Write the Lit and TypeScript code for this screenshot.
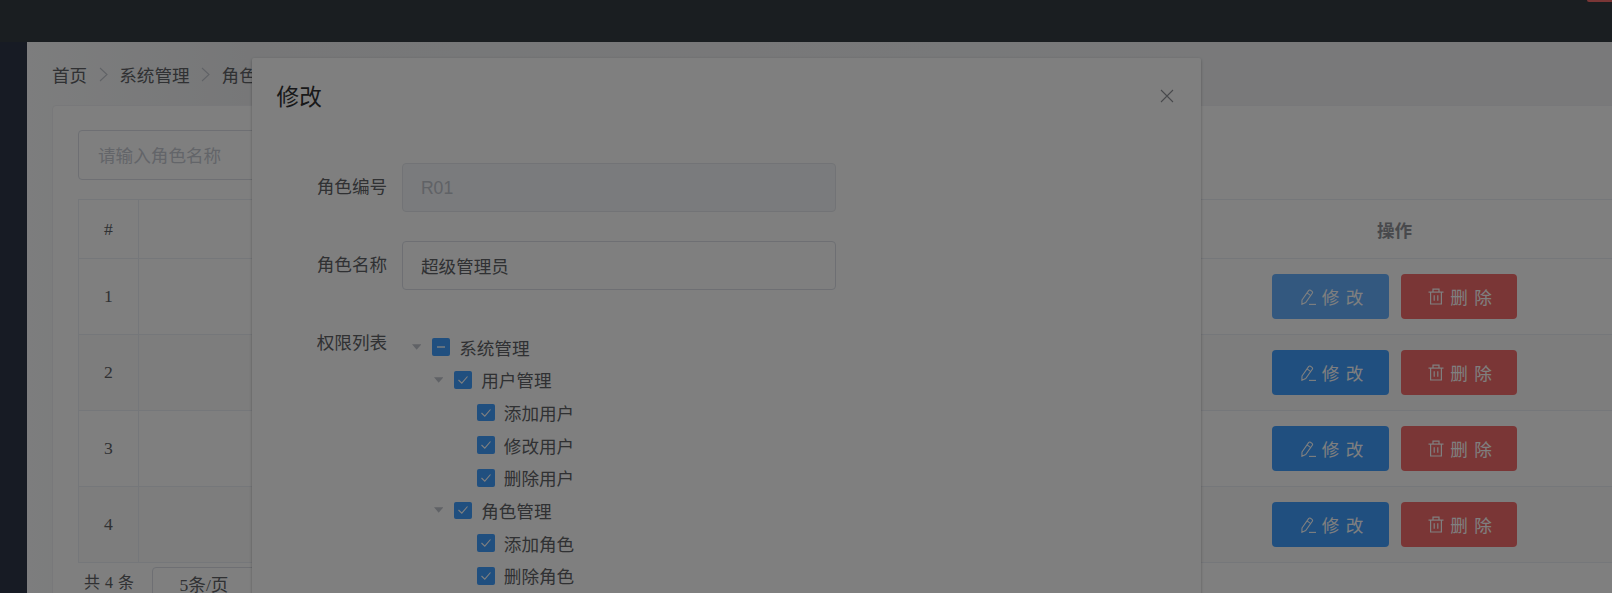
import { LitElement, html, css } from "lit";
import { customElement } from "lit/decorators.js";

const pencil = html`<svg class="ico" width="15" height="16" viewBox="0 0 15 16" fill="none" stroke="currentColor" stroke-width="1.1"><path d="M1 11 L7.6 1.6 Q8.4 .6 9.5 1.3 L11 2.4 Q12 3.2 11.3 4.2 L4.7 13.6 L.9 15.3 Z"/><path d="M6 3.9 L9.8 6.6"/><path d="M8 15.4 H15"/></svg>`;
const trash = html`<svg class="ico" width="16" height="17" viewBox="0 0 16 17" fill="none" stroke="currentColor" stroke-width="1.2"><path d="M.5 4.1 H15.5"/><path d="M5 4 V1.2 H11 V4"/><path d="M2.6 4.1 V16 H13.4 V4.1"/><path d="M6.2 7.2 V12.8 M9.8 7.2 V12.8"/></svg>`;

type Node = { label: string; depth: number; arrow?: boolean; state: "checked" | "partial" };
const tree: Node[] = [
  { label: "系统管理", depth: 0, arrow: true, state: "partial" },
  { label: "用户管理", depth: 1, arrow: true, state: "checked" },
  { label: "添加用户", depth: 2, state: "checked" },
  { label: "修改用户", depth: 2, state: "checked" },
  { label: "删除用户", depth: 2, state: "checked" },
  { label: "角色管理", depth: 1, arrow: true, state: "checked" },
  { label: "添加角色", depth: 2, state: "checked" },
  { label: "删除角色", depth: 2, state: "checked" },
];

@customElement("app-root")
export class AppRoot extends LitElement {
  static styles = css`
    :host { display: block; width: 1612px; height: 593px; position: relative; overflow: hidden;
      font-family: "Liberation Sans", "Noto Sans CJK SC", sans-serif; font-size: 17.6px; color: #606266; }
    * { box-sizing: border-box; }
    .header { height: 42px; background: #353d43; display: flex; justify-content: flex-end; align-items: flex-start; }
    .redtab { width: 25px; height: 2px; background: #f56c6c; border-bottom-left-radius: 3px; }
    .below { display: flex; height: 551px; }
    .side { width: 27px; flex: none; background: #2e3648; }
    .main { flex: 1; min-width: 0; overflow: hidden; padding: 21px 0 0 25px;
      background: linear-gradient(90deg, #fafbfc 0, #eeeff1 220px, #f2f3f5 1174px); }
    .crumb { display: flex; align-items: center; height: 22px; margin-bottom: 20px; }
    .sep { width: 32px; display: flex; justify-content: center; color: #c0c4cc; }
    .card { width: 1600px; background: #fff; border: 1px solid #f0f1f4; border-radius: 4px; padding: 23.5px 25px; }
    .search { width: 400px; height: 50px; border: 1px solid #dcdfe6; border-radius: 4px; padding: 0 19px;
      display: flex; align-items: center; color: #c6cad2; margin-bottom: 19.5px; }
    .table { display: grid; grid-template-columns: 60px 1fr 462px; grid-template-rows: 59px repeat(4, 76px); border-left: 1px solid #ebeef5; border-top: 1px solid #ebeef5;
      font-family: "Liberation Serif", "Noto Sans CJK SC", serif; }
    .table > div { border-right: 1px solid #ebeef5; border-bottom: 1px solid #ebeef5; display: flex; align-items: center; justify-content: center; }
    .table .opsh { font-family: "Liberation Sans", "Noto Sans CJK SC", sans-serif; font-weight: 700; color: #909399; }
    .table .alt { background: #fafafa; }
    .table .ops { gap: 12px; font-family: "Liberation Sans", "Noto Sans CJK SC", sans-serif; }
    .btn { height: 45px; border-radius: 4px; color: #fff; display: flex; align-items: center; justify-content: center; gap: 6px; }
    .btn .t { display: flex; gap: 6.3px; }
    .edit { width: 117px; background: #409eff; padding-left: 3px; }
    .edit.hover { background: #66b1ff; }
    .del { width: 116px; background: #f56c6c; padding-left: 2px; }
    .ico { display: block; flex: none; }
    .pager { display: flex; align-items: flex-start; margin-top: 3.5px; padding-left: 6px; height: 40px;
      font-family: "Liberation Serif", "Noto Sans CJK SC", serif; }
    .total { width: 68px; line-height: 32px; font-size: 16px; word-spacing: 1px; }
    .select { width: 300px; height: 40px; border: 1px solid #dcdfe6; border-radius: 4px; padding: 5px 0 0 26.5px; line-height: 24px; }
    .dialog { position: absolute; left: 252px; top: 58px; width: 949px; height: 600px; background: #fff; border-radius: 2px;
      box-shadow: 0 1px 3px rgba(0,0,0,.3); }
    .dhead { display: flex; justify-content: space-between; align-items: flex-start; padding: 26px 27px 0 24.6px; height: 52px; }
    .title { font-size: 22.6px; line-height: 28px; color: #303133; }
    .close { color: #909399; display: block; margin-top: 5px; }
    .dbody { padding: 53px 0 0 39.5px; }
    .row { display: flex; margin-bottom: 28.7px; }
    .label { width: 110px; flex: none; padding-right: 14.4px; text-align: right; line-height: 49.3px; white-space: nowrap; }
    .input { width: 434px; height: 49.3px; border: 1px solid #dcdfe6; border-radius: 4px; padding: 0 18.4px; display: flex; align-items: center; }
    .input.off { background: #f5f7fa; border-color: #e4e7ed; color: #c0c4cc; padding-top: 2px; }
    .tree { display: flex; flex-direction: column; padding-top: 12px; }
    .node { display: flex; align-items: center; height: 32.65px; }
    .arrow { width: 9.4px; height: 6px; flex: none; margin-right: 11px; }
    .arrowgap { width: 21px; flex: none; }
    .box { width: 17.6px; height: 17.6px; border-radius: 2px; background: #409eff; flex: none; margin-right: 9.2px; display: flex; align-items: center; justify-content: center; color: #fff; }
    .overlay { position: absolute; inset: 0; background: rgba(0,0,0,.5); }
  `;

  private node(n: Node) {
    return html`<div class="node" style="padding-left:${10.5 + n.depth * 22}px">
      ${n.arrow
        ? html`<svg class="arrow" viewBox="0 0 10 6"><path d="M0 0H10L5 6Z" fill="#c0c4cc"/></svg>`
        : html`<span class="arrowgap"></span>`}
      <span class="box">${n.state === "partial"
        ? html`<svg width="10" height="4" viewBox="0 0 10 4"><path d="M1 2H9" stroke="currentColor" stroke-width="1.4"/></svg>`
        : html`<svg width="12" height="10" viewBox="0 0 12 10" fill="none"><path d="M1.5 5 L4.8 8.2 L10.5 1.5" stroke="currentColor" stroke-width="1.1"/></svg>`}</span>
      <span>${n.label}</span>
    </div>`;
  }

  render() {
    const chevron = html`<span class="sep"><svg width="9" height="15" viewBox="0 0 9 15" fill="none"><path d="M1 1 L8 7.5 L1 14" stroke="currentColor" stroke-width="1.1"/></svg></span>`;
    return html`
      <div class="header"><div class="redtab"></div></div>
      <div class="below">
        <div class="side"></div>
        <div class="main">
          <div class="crumb"><span>首页</span>${chevron}<span>系统管理</span>${chevron}<span>角色管理</span></div>
          <div class="card">
            <div class="search">请输入角色名称</div>
            <div class="table">
              <div>#</div><div></div><div class="opsh">操作</div>
              ${[1, 2, 3, 4].map((i) => {
                const alt = i % 2 === 0 ? "alt" : "";
                return html`
                  <div class=${alt}>${i}</div>
                  <div class=${alt}></div>
                  <div class="ops ${alt}">
                    <span class="btn edit ${i === 1 ? "hover" : ""}">${pencil}<span class="t"><span>修</span><span>改</span></span></span>
                    <span class="btn del">${trash}<span class="t"><span>删</span><span>除</span></span></span>
                  </div>`;
              })}
            </div>
            <div class="pager"><span class="total">共 4 条</span><span class="select">5条/页</span></div>
          </div>
        </div>
      </div>
      <div class="dialog">
        <div class="dhead">
          <span class="title">修改</span>
          <svg class="close" width="14" height="14" viewBox="0 0 14 14" fill="none"><path d="M1 1 L13 13 M13 1 L1 13" stroke="currentColor" stroke-width="1.1"/></svg>
        </div>
        <div class="dbody">
          <div class="row"><span class="label">角色编号</span><span class="input off">R01</span></div>
          <div class="row"><span class="label">角色名称</span><span class="input">超级管理员</span></div>
          <div class="row"><span class="label">权限列表</span><div class="tree">${tree.map((n) => this.node(n))}</div></div>
        </div>
      </div>
      <div class="overlay"></div>
    `;
  }
}
